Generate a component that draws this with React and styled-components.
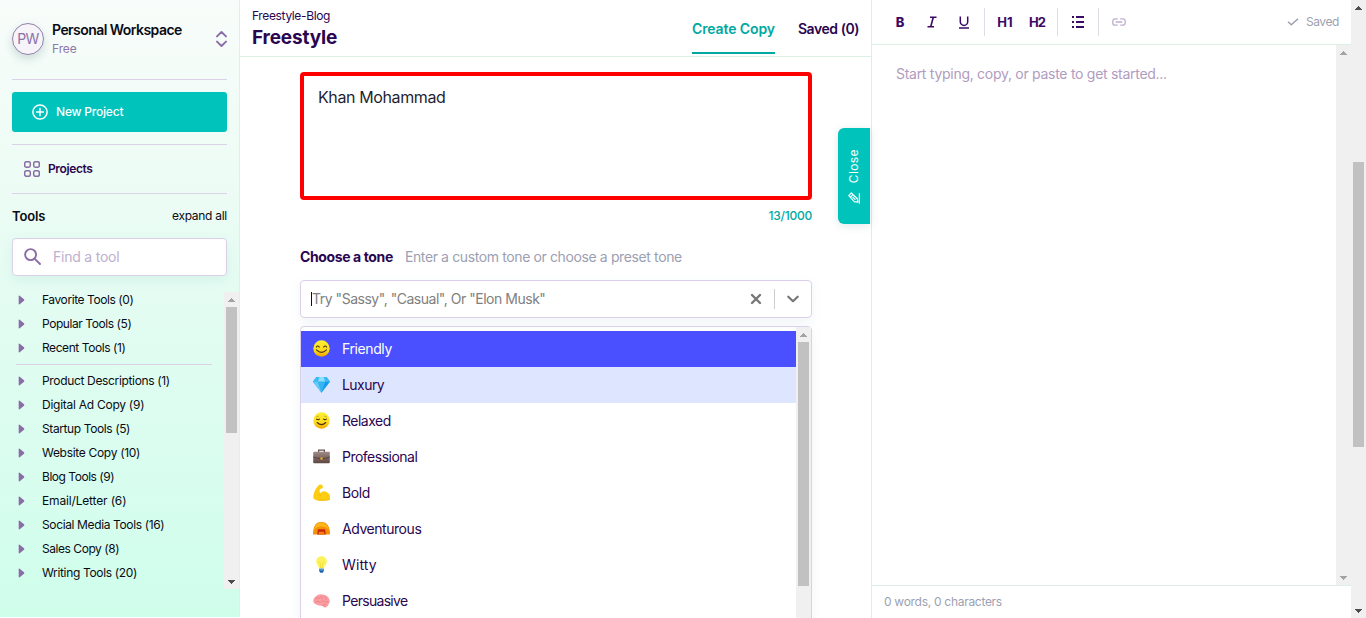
import React from "react";
import styled, { createGlobalStyle } from "styled-components";

const GlobalStyle = createGlobalStyle`
  * { box-sizing: border-box; }
  body {
    margin: 0;
    background: #fff;
    overflow: hidden;
    color: #0b0b14;
    font-family: Inter, "Liberation Sans", sans-serif;
    font-size: 12px;
  }
  svg { display: block; flex: none; }
`;

/* ---------- shared ---------- */

const Text = styled.span`
  display: block;
  flex: none;
  white-space: nowrap;
  font-size: ${(p) => p.$size || 12}px;
  font-weight: ${(p) => p.$weight || 430};
  line-height: ${(p) => p.$line || 16}px;
  letter-spacing: ${(p) => p.$track || 0}px;
  color: ${(p) => p.$color || "inherit"};
`;

const Divider = styled.hr`
  flex: none;
  width: 100%;
  height: 1px;
  margin: 0;
  border: 0;
  background: #dcd2e8;
`;

const Rail = styled.div`
  display: flex;
  flex: none;
  flex-direction: column;
  align-items: center;
  justify-content: space-between;
  width: 15px;
  height: ${(p) => p.$height}px;
  background: #f0f0f0;
`;

const RailTop = styled.div`
  display: flex;
  flex-direction: column;
  align-items: center;
`;

const RailThumb = styled.div`
  width: 11px;
  height: ${(p) => p.$size}px;
  margin-top: ${(p) => p.$offset}px;
  background: #c1c1c1;
`;

const ArrowSlot = styled.div`
  display: grid;
  place-items: center;
  width: 15px;
  height: 15px;
`;

function Arrow({ down, muted }) {
  return (
    <ArrowSlot>
      <svg width="7" height="4" viewBox="0 0 7 4" shapeRendering="crispEdges" fill={muted ? "#a3a3a3" : "#4d4d4d"}>
        <path d={down ? "M0 0h7v1h-1v1h-1v1h-1v1h-1v-1h-1v-1h-1v-1h-1z" : "M3 0h1v1h1v1h1v1h1v1h-7v-1h1v-1h1v-1h1z"} />
      </svg>
    </ArrowSlot>
  );
}

function Scrollbar({ height, thumb, offset = 0, upMuted, downMuted }) {
  return (
    <Rail $height={height}>
      <RailTop>
        <Arrow muted={upMuted} />
        {thumb && <RailThumb $size={thumb} $offset={offset} />}
      </RailTop>
      <Arrow down muted={downMuted} />
    </Rail>
  );
}

/* ---------- page ---------- */

const Page = styled.div`
  display: flex;
  width: 1366px;
  height: 618px;
  overflow: hidden;
`;

/* ---------- sidebar ---------- */

const Sidebar = styled.aside`
  display: flex;
  flex: none;
  flex-direction: column;
  width: 240px;
  height: 617px;
  border-right: 1px solid #e1efe9;
  background: linear-gradient(180deg, #f8fcfa 0%, #effcf6 25%, #e2fcf2 52%, #cffeeb 100%);
`;

const SidebarTop = styled.div`
  display: flex;
  flex-direction: column;
  padding: 0 12px;
`;

const Workspace = styled.div`
  display: flex;
  align-items: center;
  height: 79px;
  padding-bottom: 1px;
`;

const Avatar = styled.div`
  display: grid;
  place-items: center;
  flex: none;
  width: 32px;
  height: 32px;
  margin-right: 8px;
  border: 1px solid #9480ad;
  border-radius: 50%;
  background: #f6f4f8;
  box-shadow: 0 4px 10px rgba(20, 80, 80, 0.18);
`;

const WorkspaceName = styled.div`
  flex: 1;
`;

const NewProject = styled.button`
  display: flex;
  align-items: center;
  gap: 8px;
  height: 40px;
  margin: 12px 0;
  padding: 0 20px;
  border: 0;
  border-radius: 3px;
  background: #00c4bc;
  color: #fff;
  font-family: inherit;
`;

const NavItem = styled.a`
  display: flex;
  align-items: center;
  gap: 8px;
  height: 48px;
  padding-left: 12px;
`;

const ToolsHead = styled.div`
  display: flex;
  align-items: center;
  justify-content: space-between;
  height: 44px;
`;

const Search = styled.div`
  display: flex;
  align-items: center;
  gap: 12px;
  height: 38px;
  padding-left: 11px;
  padding-bottom: 1px;
  border: 1px solid #dccfe9;
  border-radius: 4px;
  background: #fff;
  box-shadow: 0 4px 12px rgba(40, 160, 140, 0.09);
`;

const ToolScroller = styled.div`
  display: flex;
  justify-content: space-between;
  height: 297px;
  margin-top: 16px;
`;

const ToolList = styled.div`
  display: flex;
  flex-direction: column;
  gap: 8px;
  width: 212px;
  padding-left: 16px;
`;

const ToolRow = styled.div`
  display: flex;
  align-items: center;
  gap: 17px;
  height: 16px;
  padding-left: 2px;
`;

const quickTools = [
  ["Favorite Tools (0)", -0.42],
  ["Popular Tools (5)", -0.43],
  ["Recent Tools (1)", -0.43],
];

const toolGroups = [
  ["Product Descriptions (1)", -0.34],
  ["Digital Ad Copy (9)", -0.26],
  ["Startup Tools (5)", -0.39],
  ["Website Copy (10)", -0.31],
  ["Blog Tools (9)", -0.47],
  ["Email/Letter (6)", -0.16],
  ["Social Media Tools (16)", -0.37],
  ["Sales Copy (8)", -0.45],
  ["Writing Tools (20)", -0.34],
];

function ToolEntry({ label, track }) {
  return (
    <ToolRow>
      <svg width="7" height="10" viewBox="0 0 7 10">
        <path d="M.7 1.2Q.7 0 1.7.7L6 4.3Q6.7 5 6 5.7L1.7 9.3Q.7 10 .7 8.8Z" fill="#8a6da6" />
      </svg>
      <Text $track={track}>{label}</Text>
    </ToolRow>
  );
}

function SidebarPanel() {
  return (
    <Sidebar>
      <SidebarTop>
        <Workspace>
          <Avatar>
            <Text $size={14} $track={-0.7} $color="#8a72a8">PW</Text>
          </Avatar>
          <WorkspaceName>
            <Text $size={14} $weight={600} $line={18} $track={-0.55}>Personal Workspace</Text>
            <Text $color="#8d78ab" $line={19} $track={-0.1}>Free</Text>
          </WorkspaceName>
          <svg width="11" height="16" viewBox="0 0 11 16" fill="none" stroke="#8a6da6" strokeWidth="1.9" strokeLinecap="round" strokeLinejoin="round">
            <path d="M1 5.4 5.5 1 10 5.4M1 10.6 5.5 15l4.5-4.4" />
          </svg>
        </Workspace>
        <Divider />
        <NewProject>
          <svg width="16" height="16" viewBox="0 0 16 16" fill="none" stroke="#fff" strokeWidth="1.5" strokeLinecap="round">
            <circle cx="8" cy="8" r="7.1" />
            <path d="M8 4.6v6.8M4.6 8h6.8" />
          </svg>
          <Text $weight={550} $track={-0.2}>New Project</Text>
        </NewProject>
        <Divider />
        <NavItem>
          <svg width="16" height="16" viewBox="0 0 16 16" fill="none" stroke="#8a6da6" strokeWidth="1.5">
            <rect x=".7" y=".7" width="5.6" height="5.6" rx="1.7" />
            <rect x="9.7" y=".7" width="5.6" height="5.6" rx="1.7" />
            <rect x=".7" y="9.7" width="5.6" height="5.6" rx="1.7" />
            <rect x="9.7" y="9.7" width="5.6" height="5.6" rx="1.7" />
          </svg>
          <Text $weight={600} $track={-0.38} $color="#2a0550">Projects</Text>
        </NavItem>
        <Divider />
        <ToolsHead>
          <Text $size={13} $weight={600} $line={18} $track={-0.15}>Tools</Text>
          <Text $track={-0.28}>expand all</Text>
        </ToolsHead>
        <Search>
          <svg width="17" height="17" viewBox="0 0 17 17" fill="none" stroke="#8a6da6" strokeWidth="1.9" strokeLinecap="round">
            <circle cx="6.6" cy="6.6" r="5.5" />
            <path d="M10.8 10.8 16 16" />
          </svg>
          <Text $size={14} $line={18} $weight={400} $track={-0.22} $color="#bdb0ce">Find a tool</Text>
        </Search>
      </SidebarTop>
      <ToolScroller>
        <ToolList>
          {quickTools.map(([label, track]) => <ToolEntry key={label} label={label} track={track} />)}
          <Divider />
          {toolGroups.map(([label, track]) => <ToolEntry key={label} label={label} track={track} />)}
        </ToolList>
        <Scrollbar height={297} thumb={126} upMuted />
      </ToolScroller>
    </Sidebar>
  );
}

/* ---------- form column ---------- */

const Main = styled.main`
  display: flex;
  flex: none;
  flex-direction: column;
  width: 632px;
  height: 618px;
  border-right: 1px solid #dfeee5;
`;

const Header = styled.header`
  display: flex;
  flex: none;
  justify-content: space-between;
  height: 57px;
  padding: 8px 12px 0;
  border-bottom: 1px solid #dcf0e4;
  color: #2a0550;
`;

const Tabs = styled.nav`
  display: flex;
  gap: 23px;
`;

const Tab = styled.a`
  height: 46px;
  padding-top: 12px;
  border-bottom: 2px solid ${(p) => (p.$active ? "#00a89f" : "transparent")};
  color: ${(p) => (p.$active ? "#00a89f" : "#2a0550")};
`;

const Body = styled.div`
  display: flex;
  flex: 1;
  justify-content: space-between;
  min-height: 0;
  padding-left: 60px;
`;

const Form = styled.div`
  display: flex;
  flex-direction: column;
  width: 512px;
  padding-top: 15px;
`;

const TextArea = styled.div`
  flex: none;
  height: 128px;
  padding: 11px 14px;
  border: 4px solid #f00;
  border-radius: 4px;
`;

const Counter = styled.div`
  display: flex;
  justify-content: flex-end;
  padding-top: 8px;
`;

const ToneField = styled.section`
  display: flex;
  flex: none;
  flex-direction: column;
  padding-top: 24px;
`;

const FieldLabel = styled.div`
  display: flex;
  flex: none;
  align-items: center;
  gap: 12px;
  height: 18px;
  margin-bottom: 14px;
`;

const Select = styled.div`
  display: flex;
  flex: none;
  align-items: center;
  height: 38px;
  padding: 0 12px 0 10px;
  border: 1px solid #dccfe9;
  border-radius: 4px;
  box-shadow: 0 4px 12px rgba(40, 110, 140, 0.07);
`;

const Caret = styled.div`
  width: 1px;
  height: 14px;
  background: #111;
`;

const SelectValue = styled.div`
  flex: 1;
  padding-bottom: 1px;
`;

const SelectSplit = styled.div`
  width: 1px;
  height: 20px;
  margin: 0 12px;
  background: #ccc;
`;

const Menu = styled.div`
  display: flex;
  flex: none;
  justify-content: space-between;
  height: 310px;
  margin-top: 8px;
  border: 1px solid #dccfe9;
  border-radius: 4px;
  box-shadow: 0 4px 12px rgba(40, 110, 140, 0.07);
`;

const Options = styled.div`
  flex: 1;
  padding-top: 4px;
`;

const optionTone = {
  selected: { background: "#4a4fff", color: "#fff" },
  focused: { background: "#dee5ff", color: "#2a0550" },
  plain: { background: "#fff", color: "#2a0550" },
};

const Option = styled.div`
  display: flex;
  align-items: center;
  gap: 12px;
  height: 36px;
  padding: 0 0 1px 12px;
  background: ${(p) => optionTone[p.$tone].background};
  color: ${(p) => optionTone[p.$tone].color};
`;

const CloseRail = styled.div`
  padding-top: 71px;
  padding-right: 1px;
`;

const CloseTab = styled.button`
  display: flex;
  flex-direction: column;
  align-items: center;
  gap: 9px;
  width: 32px;
  height: 96px;
  padding: 21px 0 0;
  border: 0;
  border-radius: 6px 0 0 6px;
  background: #00c4bc;
  color: #fff;
  font-family: inherit;
  box-shadow: 0 2px 10px rgba(0, 80, 80, 0.12);
`;

const VerticalText = styled(Text)`
  writing-mode: vertical-rl;
  transform: rotate(180deg);
`;

function Emoji({ children }) {
  return (
    <svg width="17" height="17" viewBox="0 0 16 16">
      <defs>
        <linearGradient id="face" x1="0" y1="0" x2="0" y2="1">
          <stop offset="0" stopColor="#fdf032" />
          <stop offset="0.6" stopColor="#fcdc20" />
          <stop offset="1" stopColor="#f0a400" />
        </linearGradient>
        <linearGradient id="leather" x1="0" y1="0" x2="0" y2="1">
          <stop offset="0" stopColor="#a08b86" />
          <stop offset="1" stopColor="#5d4540" />
        </linearGradient>
      </defs>
      {children}
    </svg>
  );
}

const emojis = {
  smile: (
    <Emoji>
      <circle cx="8" cy="8" r="7.7" fill="url(#face)" />
      <path d="M3.2 6.6q1.300-1.900 2.700 0M10.100 6.600q1.300-1.900 2.700 0M3.300 9.300q4.700 4.600 9.400 0" fill="none" stroke="#4b3418" strokeWidth="1.1" strokeLinecap="round" />
    </Emoji>
  ),
  gem: (
    <Emoji>
      <path d="M3.2 1h9.6L16 5.5 8 15.8 0 5.5Z" fill="#139be8" />
      <path d="M3.2 1 0 5.5h4.5L6 1ZM10 1l1.5 4.5H16L12.8 1Z" fill="#3cbcf5" />
      <path d="M6 1 4.5 5.5h7L10 1Z" fill="#8fe0fd" />
      <path d="M4.5 5.5 8 15.8l3.5-10.3Z" fill="#35b4f2" />
      <path d="M0 5.5 8 15.8 4.5 5.5Z" fill="#67cdf8" />
    </Emoji>
  ),
  relieved: (
    <Emoji>
      <circle cx="8" cy="8" r="7.7" fill="url(#face)" />
      <path d="M3.400 6.700q1.300 1 2.700 0M9.900 6.700q1.300 1 2.700 0M4 9.900q4 4 8 0" fill="none" stroke="#4b3418" strokeWidth="1.1" strokeLinecap="round" />
      <path d="M3.400 4.500l2-.7M12.600 4.500l-2-.7" fill="none" stroke="#b08a20" strokeWidth=".6" strokeLinecap="round" />
    </Emoji>
  ),
  briefcase: (
    <Emoji>
      <path d="M5.300 4V2h5.400v2" fill="none" stroke="#66534e" strokeWidth="1.2" />
      <rect x=".2" y="3.6" width="15.6" height="10.8" rx=".9" fill="url(#leather)" />
      <path d="M.2 8.500q7.800 3 15.600 0" fill="none" stroke="#4b3732" strokeWidth=".7" />
      <rect x="7" y="9" width="2" height="1.8" fill="#fcc21b" />
    </Emoji>
  ),
  muscle: (
    <Emoji>
      <path d="M5.100 1.300Q6.400-.1 8.200.7q1.600 1 1 2.800-.5 1.100-2 .9-1.200.6-1 2.500l.5 1.600q2.700-2.300 5.600-1.300 2.800 1 3.600 3.600v4q-6.700 1.700-12.400.5Q.2 14.400.2 12.400.7 5.800 5.100 1.300Z" fill="#fccd13" />
      <path d="M5.100 9.400q.6 1.600 2.400 1.700M4.300 14.900q6 1.100 11.600-.3" fill="none" stroke="#f2b705" strokeWidth=".8" />
    </Emoji>
  ),
  tent: (
    <Emoji>
      <path d="M0 13.700Q0 2 7.500 1.900 16 1.700 16 13.700Z" fill="#f79009" />
      <path d="M.6 10Q2 2.700 7.500 2.500 13.500 2.600 15.300 10q-2-3.900-7.300-3.900T.6 10Z" fill="#fdb916" />
      <path d="M3.900 13.700 4.600 8.600h6.800l.7 5.100Z" fill="#c62c0b" />
      <path d="M5.900 11h4.200l.9 2.700H5Z" fill="#f57c12" />
    </Emoji>
  ),
  bulb: (
    <Emoji>
      <path d="M8 .2c3.100 0 5 2.200 5 4.900 0 2.900-2.400 3.900-2.600 6.700H5.600C5.400 9 3 8 3 5.100 3 2.400 4.900.2 8 .2Z" fill="#fcf35a" />
      <path d="M5.700 5.200 7 7.100v4h2v-4l1.300-1.900" fill="none" stroke="#ecd63a" strokeWidth=".7" />
      <path d="M5.700 11.800h4.600v2.300l-1.200 1.600H6.900l-1.200-1.600Z" fill="#4e9bdc" />
      <path d="M5.800 13.600h4.400l-1.200 2H7Z" fill="#2360a5" />
    </Emoji>
  ),
  brain: (
    <Emoji>
      <path d="M2.200 4.400Q5 1.800 9.100 2.300q4.600.6 6.100 4 1.300 3-.5 4.800-.5 2.900-3.300 3.400-1.500.3-2.700-1.700Q5.600 13 3.700 12 .3 11.200.2 8.300.1 5.800 2.200 4.400Z" fill="#fb9ca1" />
      <path d="M3 6.200q1.700-1.800 3.400-.4M7 4q2 .2 1.700 2.300M10.500 4.300q2.300.6 2 2.700M2.600 9.200q2.400-1.500 4.200.7M8 8.600q2.400-.9 3.600 1.200M12.700 9q1.300-.1 1.700 1.200M8.700 12.700l3-.8" fill="none" stroke="#e57f88" strokeWidth=".8" strokeLinecap="round" />
    </Emoji>
  ),
};

const tones = [
  ["smile", "Friendly", -0.4, "selected"],
  ["gem", "Luxury", -0.55, "focused"],
  ["relieved", "Relaxed", -0.5, "plain"],
  ["briefcase", "Professional", -0.51, "plain"],
  ["muscle", "Bold", -0.4, "plain"],
  ["tent", "Adventurous", -0.45, "plain"],
  ["bulb", "Witty", 0.1, "plain"],
  ["brain", "Persuasive", -0.7, "plain"],
];

function FormPanel() {
  return (
    <Main>
      <Header>
        <div>
          <Text $track={-0.36}>Freestyle-Blog</Text>
          <Text $size={19} $weight={700} $line={28} $track={-0.17}>Freestyle</Text>
        </div>
        <Tabs>
          <Tab $active>
            <Text $size={14} $weight={600} $line={18} $track={-0.11}>Create Copy</Text>
          </Tab>
          <Tab>
            <Text $size={14} $weight={600} $line={18} $track={-0.45}>Saved (0)</Text>
          </Tab>
        </Tabs>
      </Header>
      <Body>
        <Form>
          <TextArea>
            <Text $size={16} $line={20} $track={-0.38} $color="#1f1f33">Khan Mohammad</Text>
          </TextArea>
          <Counter>
            <Text $weight={550} $track={-0.22} $color="#00a89f">13/1000</Text>
          </Counter>
          <ToneField>
            <FieldLabel>
              <Text $size={14} $weight={700} $track={-0.38} $color="#2a0550">Choose a tone</Text>
              <Text $size={14} $weight={400} $track={-0.38} $color="#9c9fb2">Enter a custom tone or choose a preset tone</Text>
            </FieldLabel>
            <Select>
              <Caret />
              <SelectValue>
                <Text $size={14} $weight={400} $line={18} $track={-0.48} $color="#808080">Try "Sassy", "Casual", Or "Elon Musk"</Text>
              </SelectValue>
              <svg width="12" height="12" viewBox="0 0 12 12" fill="none" stroke="#777" strokeWidth="2.4" strokeLinecap="round">
                <path d="m2 2 8 8M10 2l-8 8" />
              </svg>
              <SelectSplit />
              <svg width="12" height="8" viewBox="0 0 12 8" fill="none" stroke="#777" strokeWidth="2.2" strokeLinecap="round" strokeLinejoin="round">
                <path d="m1.300 1.700 4.700 4.500 4.700-4.500" />
              </svg>
            </Select>
            <Menu>
              <Options>
                {tones.map(([icon, label, track, tone]) => (
                  <Option key={label} $tone={tone}>
                    {emojis[icon]}
                    <Text $size={14} $line={18} $track={track}>{label}</Text>
                  </Option>
                ))}
              </Options>
              <Scrollbar height={300} thumb={244} upMuted />
            </Menu>
          </ToneField>
        </Form>
        <CloseRail>
          <CloseTab>
            <VerticalText $track={0.4}>Close</VerticalText>
            <svg width="12" height="12" viewBox="0 0 12 12" fill="none" stroke="#fff" strokeWidth="1.2" strokeLinejoin="round" strokeLinecap="round">
              <path d="M.8 3.600 3.300 1l6 5.700.6 3.500-3.600-.5ZM2.300 5.300 5 2.600M5 5.400l2 2M11.400 1.500v9.700" />
            </svg>
          </CloseTab>
        </CloseRail>
      </Body>
    </Main>
  );
}

/* ---------- editor ---------- */

const Editor = styled.section`
  display: flex;
  flex: 1;
  flex-direction: column;
`;

const Toolbar = styled.div`
  display: flex;
  flex: none;
  align-items: center;
  justify-content: space-between;
  height: 45px;
  padding-right: 12px;
  border-bottom: 1px solid #dcf0e4;
  color: #3a0a66;
`;

const ToolGroup = styled.div`
  display: flex;
  align-items: center;
  padding: 0 4px;
  height: 28px;
  border-left: ${(p) => (p.$first ? 0 : 1)}px solid #dfdce8;
`;

const ToolGroups = styled.div`
  display: flex;
  padding-left: 8px;
`;

const ToolButton = styled.button`
  display: grid;
  place-items: center;
  width: 32px;
  height: 28px;
  padding: 0;
  border: 0;
  background: none;
  color: inherit;
  font-family: inherit;
`;

const SaveState = styled.div`
  display: flex;
  align-items: center;
  gap: 7px;
  color: #9c9fb2;
`;

const EditorBody = styled.div`
  display: flex;
  flex: none;
  justify-content: space-between;
  height: 540px;
  padding-left: 24px;
`;

const Placeholder = styled.div`
  padding-top: 20px;
`;

const StatusBar = styled.footer`
  display: flex;
  flex: 1;
  align-items: center;
  padding-left: 12px;
  border-top: 1px solid #dfeee5;
`;

function EditorPanel() {
  return (
    <Editor>
      <Toolbar>
        <ToolGroups>
          <ToolGroup $first>
            <ToolButton>
              <Text $size={13} $weight={800}>B</Text>
            </ToolButton>
            <ToolButton>
              <svg width="10" height="12" viewBox="0 0 10 12" fill="none" stroke="currentColor" strokeWidth="1.6">
                <path d="M3 1.300h6.500M.5 10.700H7M6.300 1.300 3.700 10.700" />
              </svg>
            </ToolButton>
            <ToolButton>
              <svg width="10" height="13" viewBox="0 0 10 13" fill="none" stroke="currentColor" strokeWidth="1.5">
                <path d="M1.300.5v5.200a3.700 3.700 0 0 0 7.400 0V.5M0 12h10" />
              </svg>
            </ToolButton>
          </ToolGroup>
          <ToolGroup>
            <ToolButton>
              <Text $size={13} $weight={700}>H1</Text>
            </ToolButton>
            <ToolButton>
              <Text $size={13} $weight={700} $track={-0.9}>H2</Text>
            </ToolButton>
          </ToolGroup>
          <ToolGroup>
            <ToolButton>
              <svg width="12" height="12" viewBox="0 0 12 12" shapeRendering="crispEdges" fill="currentColor">
                <path d="M0 0h2v2H0zM4 0h8v2H4zM0 5h2v2H0zM4 5h8v2H4zM0 10h2v2H0zM4 10h8v2H4z" />
              </svg>
            </ToolButton>
          </ToolGroup>
          <ToolGroup>
            <ToolButton>
              <svg width="14" height="8" viewBox="0 0 14 8" fill="none" stroke="#bfaecf" strokeWidth="1.3" strokeLinecap="round">
                <path d="M5.300.9H3a2.200 2.200 0 0 0-2.200 2.200v1.800A2.200 2.200 0 0 0 3 7.100h2.300M8.700.9H11a2.200 2.200 0 0 1 2.200 2.200v1.800A2.200 2.200 0 0 1 11 7.100H8.700M4.200 4h5.600" />
              </svg>
            </ToolButton>
          </ToolGroup>
        </ToolGroups>
        <SaveState>
          <svg width="12" height="8" viewBox="0 0 12 8" fill="none" stroke="currentColor" strokeWidth="1.5">
            <path d="m1 3.800 3.300 3L11 .8" />
          </svg>
          <Text $track={-0.4}>Saved</Text>
        </SaveState>
      </Toolbar>
      <EditorBody>
        <Placeholder>
          <Text $size={14} $weight={400} $line={18} $track={-0.28} $color="#b09cc0">Start typing, copy, or paste to get started...</Text>
        </Placeholder>
        <Scrollbar height={540} upMuted downMuted />
      </EditorBody>
      <StatusBar>
        <Text $weight={400} $track={-0.29} $color="#9c9fb2">0 words, 0 characters</Text>
      </StatusBar>
    </Editor>
  );
}

export default function App() {
  return (
    <>
      <GlobalStyle />
      <Page>
        <SidebarPanel />
        <FormPanel />
        <EditorPanel />
        <Scrollbar height={618} thumb={285} offset={147} />
      </Page>
    </>
  );
}
